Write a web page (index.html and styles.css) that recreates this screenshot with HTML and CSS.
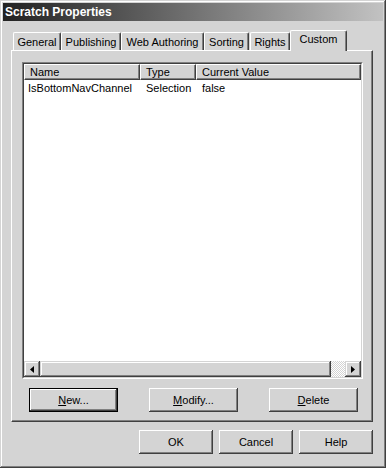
FILE: index.html
```html
<html lang="en">

<head>
    <meta charset="UTF-8">
    <title>Scratch Properties</title>
    <link rel="stylesheet" href="styles.css">
</head>

<body>
    <div class="window">
        <div class="titlebar">Scratch Properties</div>

        <div class="content">
            <div class="tabs">
                <div class="tab tab-general">General</div>
                <div class="tab tab-publishing">Publishing</div>
                <div class="tab tab-web">Web Authoring</div>
                <div class="tab tab-sorting">Sorting</div>
                <div class="tab tab-rights">Rights</div>
                <div class="tab tab-custom active">Custom</div>
            </div>

            <div class="panel">
                <div class="listview">
                    <div class="lv-frame">
                        <div class="lv-header">
                            <div class="hcol col-name">Name</div>
                            <div class="hcol col-type">Type</div>
                            <div class="hcol col-value">Current Value</div>
                        </div>
                        <div class="lv-body">
                            <div class="lv-row">
                                <div class="cell col-name">IsBottomNavChannel</div>
                                <div class="cell col-type">Selection</div>
                                <div class="cell col-value">false</div>
                            </div>
                        </div>
                        <div class="hscroll">
                            <div class="sb-btn">
                                <svg width="4" height="7" viewBox="0 0 4 7"><path d="M0 3.5 L4 0 L4 7 Z" fill="#000"/></svg>
                            </div>
                            <div class="sb-thumb"></div>
                            <div class="sb-track"></div>
                            <div class="sb-btn">
                                <svg width="4" height="7" viewBox="0 0 4 7"><path d="M4 3.5 L0 0 L0 7 Z" fill="#000"/></svg>
                            </div>
                        </div>
                    </div>
                </div>

                <div class="actions">
                    <button class="btn btn-wide default"><u>N</u>ew...</button>
                    <button class="btn btn-wide"><u>M</u>odify...</button>
                    <button class="btn btn-wide"><u>D</u>elete</button>
                </div>
            </div>

            <div class="footer">
                <button class="btn">OK</button>
                <button class="btn">Cancel</button>
                <button class="btn">Help</button>
            </div>
        </div>
    </div>
</body>

</html>
```

FILE: styles.css
```css
* {
    box-sizing: border-box;
}

body {
    margin: 0;
    background: #d4d4d4;
    color: #000;
    font-family: "Liberation Sans", Arial, sans-serif;
    font-size: 11px;
}

.window {
    width: 386px;
    height: 468px;
    padding: 3px;
    background: #d4d4d4;
    display: flex;
    flex-direction: column;
    box-shadow: inset -1px -1px #404040, inset 1px 1px #d4d4d4,
                inset -2px -2px #808080, inset 2px 2px #fff;
}

.titlebar {
    height: 18px;
    padding-left: 2px;
    display: flex;
    align-items: center;
    color: #fff;
    font-size: 12px;
    font-weight: bold;
    background: linear-gradient(to right, #222, #c2c2c2);
}

.content {
    flex: 1;
    padding: 9px 10px 0 8px;
    display: flex;
    flex-direction: column;
}

/* tab strip */
.tabs {
    height: 20px;
    padding-left: 2px;
    display: flex;
    align-items: flex-end;
    position: relative;
    z-index: 1;
}

.tab {
    height: 18px;
    display: flex;
    align-items: center;
    justify-content: center;
    background: #d4d4d4;
    border-top: 1px solid #fff;
    border-left: 1px solid #fff;
    border-right: 1px solid #404040;
    border-radius: 2px 2px 0 0;
    box-shadow: inset -1px 0 #808080;
    padding-top: 1px;
}

.tab-general { width: 48px; }
.tab-publishing { width: 60px; }
.tab-web { width: 83px; }
.tab-sorting { width: 45px; }
.tab-rights { width: 40px; margin-left: 1px; }
.tab-custom { width: 55px; }

.tab.active {
    width: 57px;
    height: 21px;
    margin: 0 0 -1px 0;
    align-items: flex-start;
    padding-top: 2px;
}

/* property page */
.panel {
    height: 372px;
    padding: 11px 9px 0 10px;
    border: 1px solid;
    border-color: #fff #404040 #404040 #fff;
    box-shadow: inset -1px -1px #808080;
}

.listview {
    height: 317px;
    border: 1px solid;
    border-color: #808080 #fff #fff #808080;
}

.lv-frame {
    height: 100%;
    background: #fff;
    border: 1px solid;
    border-color: #404040 #d4d4d4 #d4d4d4 #404040;
    display: flex;
    flex-direction: column;
}

.lv-header {
    display: flex;
    height: 16px;
}

.hcol {
    background: #d4d4d4;
    padding-left: 5px;
    line-height: 14px;
    border-top: 1px solid #fff;
    border-left: 1px solid #fff;
    border-right: 1px solid #404040;
    border-bottom: 1px solid #404040;
    box-shadow: inset -1px -1px #808080;
    white-space: nowrap;
}

.col-name { width: 116px; }
.col-type { width: 56px; }
.col-value { flex: 1; }

.lv-body {
    flex: 1;
}

.lv-row {
    display: flex;
    height: 16px;
    line-height: 16px;
}

.cell {
    padding-left: 6px;
    white-space: nowrap;
}

.cell.col-name {
    padding-left: 4px;
}

.hscroll {
    height: 16px;
    display: flex;
}

.sb-btn, .sb-thumb {
    background: #d4d4d4;
    box-shadow: inset -1px -1px #404040, inset 1px 1px #d4d4d4,
                inset -2px -2px #808080, inset 2px 2px #fff;
}

.sb-btn {
    width: 16px;
    display: flex;
    align-items: center;
    justify-content: center;
}

.sb-thumb {
    width: 291px;
}

.sb-track {
    flex: 1;
    background: repeating-conic-gradient(#fff 0 25%, #d4d4d4 0 50%) 0 0 / 2px 2px;
}

/* buttons */
.actions {
    margin-top: 9px;
    padding-left: 7px;
    display: flex;
    gap: 31px;
}

.btn {
    width: 74px;
    height: 24px;
    padding: 0;
    font-family: inherit;
    font-size: 11px;
    color: #000;
    background: #d4d4d4;
    border: none;
    box-shadow: inset -1px -1px #404040, inset 1px 1px #fff,
                inset -2px -2px #808080;
}

.btn-wide {
    width: 89px;
}

.btn.default {
    border: 1px solid #000;
    box-shadow: inset -1px -1px #404040, inset 1px 1px #fff,
                inset -2px -2px #808080;
}

.footer {
    margin-top: 8px;
    display: flex;
    justify-content: flex-end;
    gap: 6px;
}
```
